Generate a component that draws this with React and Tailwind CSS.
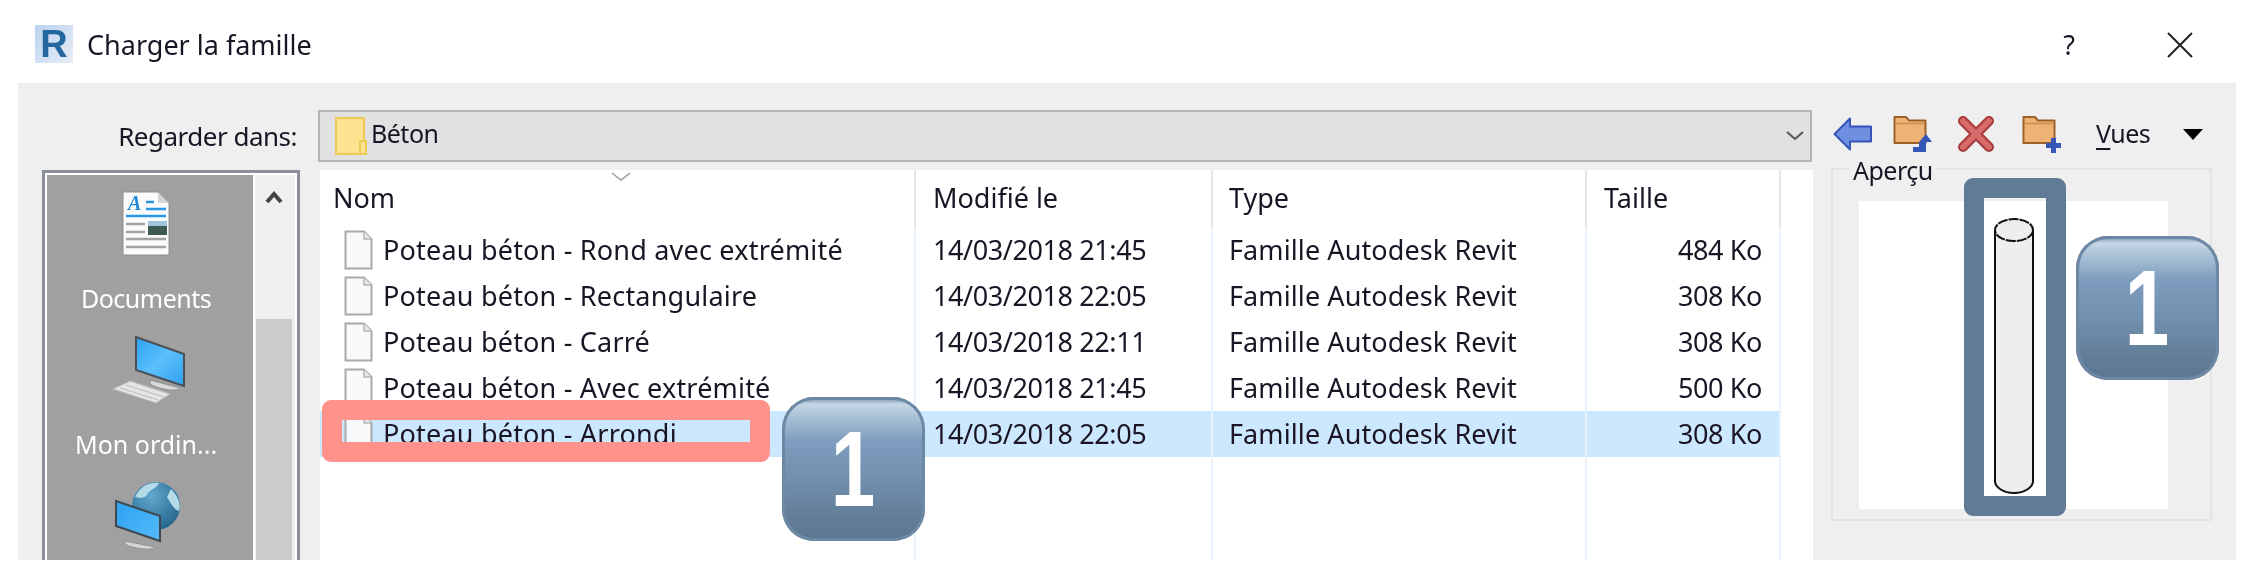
const rows = [
  ["Poteau béton - Rond avec extrémité", "14/03/2018 21:45", "484 Ko"],
  ["Poteau béton - Rectangulaire", "14/03/2018 22:05", "308 Ko"],
  ["Poteau béton - Carré", "14/03/2018 22:11", "308 Ko"],
  ["Poteau béton - Avec extrémité", "14/03/2018 21:45", "500 Ko"],
  ["Poteau béton - Arrondi", "14/03/2018 22:05", "308 Ko"],
];

function FileIcon() {
  return (
    <svg width="29" height="40" viewBox="0 0 29 40" className="shrink-0">
      <path d="M1.5 1.5H20L27.5 9V38.5H1.5Z" fill="#f8f9fa" stroke="#a9a9a9" strokeWidth="2" />
      <path d="M20 1.5V9H27.5" fill="#e8e8e8" stroke="#b5b5b5" strokeWidth="1.5" />
    </svg>
  );
}

function DocIcon() {
  return (
    <svg width="48" height="66" viewBox="0 0 48 66">
      <path d="M1 1H36L47 12V64H1Z" fill="#fbfbfb" stroke="#8e8e8e" />
      <path d="M36 1V12H47Z" fill="#d5d5d5" />
      <text x="6" y="19" fontSize="20" fontWeight="700" fontStyle="italic" fill="#1f88d8" fontFamily="Liberation Serif">A</text>
      <path d="M24 11H32M24 18H44M4 25H44" stroke="#2a97e6" strokeWidth="2.5" />
      <path d="M4 33H23M4 41H23M4 48H44M4 56H44" stroke="#a3a3a3" strokeWidth="2.5" />
      <rect x="26" y="30" width="19" height="14" fill="#3c5a50" />
      <rect x="26" y="30" width="19" height="5" fill="#9fc4dc" />
    </svg>
  );
}

function PcIcon() {
  return (
    <svg width="74" height="68" viewBox="0 0 74 68">
      <defs>
        <linearGradient id="scr" x1="0" y1="0" x2="1" y2="1">
          <stop offset="0" stopColor="#2ba2f2" />
          <stop offset="0.5" stopColor="#5cc0fb" />
          <stop offset="1" stopColor="#2f9ff0" />
        </linearGradient>
      </defs>
      <path d="M24 1L72 18V50L24 34Z" fill="url(#scr)" stroke="#4c5158" strokeWidth="2" />
      <path d="M38 44L68 52C66 56 48 54 38 48Z" fill="#d7dadc" stroke="#8f8f8f" />
      <path d="M1 53L18 45L58 58L44 67Z" fill="#e3e4e5" stroke="#b9b9b9" />
      <path d="M8 52L46 64M14 49L52 61" stroke="#bdbdbd" />
    </svg>
  );
}

function NetIcon() {
  return (
    <svg width="68" height="70" viewBox="0 0 68 70">
      <defs>
        <radialGradient id="glb" cx="0.4" cy="0.3" r="0.8">
          <stop offset="0" stopColor="#62a9cf" />
          <stop offset="1" stopColor="#1f5f86" />
        </radialGradient>
        <linearGradient id="scr2" x1="0" y1="0" x2="1" y2="1">
          <stop offset="0" stopColor="#2ba2f2" />
          <stop offset="1" stopColor="#55bbfa" />
        </linearGradient>
      </defs>
      <circle cx="41" cy="25" r="24" fill="url(#glb)" />
      <path d="M20 16C26 4 36 1 44 2C42 8 34 8 32 14C28 18 24 17 20 16ZM56 8C64 16 66 24 64 30C58 28 56 22 52 16Z" fill="#b5dbe8" />
      <path d="M1 20L45 35V60L1 45Z" fill="url(#scr2)" stroke="#3f4850" strokeWidth="2" />
      <path d="M10 60L40 66C38 70 18 68 10 63Z" fill="#d3d6d8" stroke="#8f8f8f" />
    </svg>
  );
}

function FolderBody() {
  return (
    <>
      <path d="M1.5 3H13L16 6.5H32.5V29H1.5Z" fill="#f0b274" stroke="#9c6128" strokeWidth="2" strokeLinejoin="round" />
      <path d="M2.5 9.5H31.5" stroke="#c98d4e" strokeWidth="1.5" />
    </>
  );
}

function Badge() {
  return (
    <div className="w-[143px] h-[144px] rounded-[32px] bg-[linear-gradient(180deg,#6f89a3_0%,#c6d7e6_5%,#a9c0d6_14%,#7f9ebf_30%,#7291b0_55%,#627c96_85%,#5b7690_100%)] shadow-[inset_0_0_0_3px_#6d88a4] flex items-center justify-center">
      <span className="scale-x-[0.74] font-['Liberation_Sans'] font-bold text-white text-[108px] leading-none">1</span>
    </div>
  );
}

export default function App() {
  return (
    <div className="relative w-[2244px] h-[570px] bg-white overflow-hidden font-['Noto_Sans',sans-serif] text-[#1b1424] text-[27px] [filter:blur(0.45px)]">
      {/* title bar */}
      <div className="h-[83px] flex items-start pt-[25px]">
        <div className="ml-[35px] w-[38px] h-[38px] bg-[linear-gradient(135deg,#bcd2ee,#e6eef8)] flex items-center justify-center">
          <span className="font-['Liberation_Sans'] font-bold text-[38px] leading-none text-[#24679f]">R</span>
        </div>
        <span className="ml-[14px] leading-[40px]">Charger la famille</span>
        <span className="ml-auto mr-[92px] leading-[40px]">?</span>
        <svg width="26" height="26" viewBox="0 0 26 26" className="mr-[51px] mt-[7px]">
          <path d="M1 1L25 25M25 1L1 25" stroke="#222" strokeWidth="2" />
        </svg>
      </div>

      {/* dialog body */}
      <div className="ml-[18px] w-[2218px] h-[477px] bg-[#efefef] flex flex-col">
        <div className="h-[87px] flex items-start pt-[27px] shrink-0">
          <div className="w-[279px] text-right leading-[52px] text-[26px] tracking-[-0.5px]">Regarder dans:</div>
          <div className="ml-[21px] w-[1494px] h-[52px] bg-[#e1e1e1] border-2 border-[#b4b4b4] flex items-center pl-[15px] pr-[5px]">
            <svg width="32" height="38" viewBox="0 0 32 38" className="shrink-0">
              <rect x="1" y="1" width="28" height="36" fill="#fde28f" stroke="#edc95a" strokeWidth="2" />
              <rect x="25" y="24" width="6" height="13" fill="#fde28f" stroke="#edc95a" strokeWidth="2" />
            </svg>
            <span className="ml-[4px] mb-[5px] text-[25px] tracking-[-0.5px]">Béton</span>
            <svg width="20" height="12" viewBox="0 0 20 12" className="ml-auto">
              <path d="M2 2L10 9L18 2" fill="none" stroke="#555" strokeWidth="2" />
            </svg>
          </div>

          <div className="ml-[21px] mt-[4px] h-[40px] flex items-center">
            <svg width="40" height="34" viewBox="0 0 40 34">
              <path d="M1.5 17L17 1.5V9.5H38V24.5H17V32.5Z" fill="#6f8fe0" stroke="#3553b8" strokeWidth="2" strokeLinejoin="round" />
            </svg>
            <svg width="40" height="40" viewBox="0 0 40 40" className="ml-[20px]">
              <FolderBody />
              <path d="M20 38V33H26V28L33 20L39 28H33V38Z" fill="#3558b8" />
            </svg>
            <svg width="36" height="36" viewBox="0 0 36 36" className="ml-[25px]">
              <path d="M5 5L31 31M31 5L5 31" stroke="#a83a3a" strokeWidth="10" strokeLinecap="round" />
              <path d="M5 5L31 31M31 5L5 31" stroke="#d76b6b" strokeWidth="6" strokeLinecap="round" />
            </svg>
            <svg width="40" height="40" viewBox="0 0 40 40" className="ml-[28px]">
              <FolderBody />
              <path d="M29 24V29H24V34H29V39H34V34H39V29H34V24Z" fill="#3558b8" />
            </svg>
            <span className="ml-[34px] text-[25px] tracking-[-0.5px]"><span className="underline underline-offset-[5px]">V</span>ues</span>
            <svg width="20" height="11" viewBox="0 0 20 11" className="ml-[33px]">
              <path d="M0 0H20L10 11Z" fill="#000" />
            </svg>
          </div>
        </div>

        <div className="flex items-start flex-1 min-h-0">
          {/* places sidebar */}
          <div className="ml-[24px] w-[258px] h-[390px] border-[3px] border-b-0 border-[#8b8f97] p-[2px] pb-0 bg-white flex shrink-0">
            <div className="w-[207px] pr-[8px] bg-[#a0a0a0] flex flex-col items-center text-white text-[25px] overflow-hidden">
              <div className="mt-[16px]"><DocIcon /></div>
              <div className="mt-[24px] leading-[34px] tracking-[-0.5px]">Documents</div>
              <div className="mt-[21px] ml-[6px]"><PcIcon /></div>
              <div className="mt-[23px] leading-[34px]">Mon ordin...</div>
              <div className="mt-[20px] ml-[6px]"><NetIcon /></div>
            </div>
            <div className="ml-[2px] w-[40px] bg-[#f0f0f0] flex flex-col items-center">
              <svg width="18" height="14" viewBox="0 0 18 14" className="mt-[15px] mr-[3px]">
                <path d="M2 12L9 4L16 12" fill="none" stroke="#444" strokeWidth="4" />
              </svg>
              <div className="mt-[115px] mr-[3px] w-[36px] flex-1 bg-[#cccccc]" />
            </div>
          </div>

          {/* file list */}
          <div className="ml-[20px] w-[1493px] h-[390px] bg-white shrink-0 relative">
            <svg width="20" height="10" viewBox="0 0 20 10" className="absolute left-[291px] top-[2px]">
              <path d="M1 1L10 8L19 1" fill="none" stroke="#9a9a9a" strokeWidth="1.5" />
            </svg>
            <div className="grid grid-cols-[596px_297px_374px_194px_32px] h-[57px]">
              <div className="border-r-2 border-[#e5e5e5] pl-[13px] leading-[56px]">Nom</div>
              <div className="border-r-2 border-[#e5e5e5] pl-[17px] leading-[56px]">Modifié le</div>
              <div className="border-r-2 border-[#e5e5e5] pl-[16px] leading-[56px]">Type</div>
              <div className="border-r-2 border-[#e5e5e5] pl-[17px] leading-[56px]">Taille</div>
              <div />
            </div>
            {rows.map((r, i) => (
              <div key={r[0]} className={(i === 4 ? "bg-[#cce8ff] " : "") + "grid grid-cols-[596px_297px_374px_194px] w-[1461px] h-[46px]"}>
                <div className="pl-[24px] flex items-center gap-[10px] border-r-2 border-[#eaf2fb] whitespace-nowrap tracking-[0.2px]">
                  <FileIcon />
                  <span>{r[0]}</span>
                </div>
                <div className="pl-[17px] flex items-center border-r-2 border-[#eaf2fb] tracking-[-0.4px]">{r[1]}</div>
                <div className="pl-[16px] flex items-center border-r-2 border-[#eaf2fb] tracking-[0.1px]">Famille Autodesk Revit</div>
                <div className="pr-[17px] flex items-center justify-end border-r-2 border-[#eaf2fb] tracking-[-0.4px]">{r[2]}</div>
              </div>
            ))}
            <div className="grid grid-cols-[596px_297px_374px_194px] w-[1461px] h-[103px]">
              <div className="border-r-2 border-[#eaf2fb]" />
              <div className="border-r-2 border-[#eaf2fb]" />
              <div className="border-r-2 border-[#eaf2fb]" />
              <div className="border-r-2 border-[#eaf2fb]" />
            </div>
          </div>

          {/* preview */}
          <div className="relative ml-[18px] -mt-[2px] w-[381px] h-[353px] border-2 border-[#e3e3e3] pt-[31px] pl-[26px] shrink-0">
            <span className="absolute -top-[16px] left-[16px] px-[4px] bg-[#efefef] leading-[32px] text-[25px] tracking-[-0.5px]">Aperçu</span>
            <div className="w-[309px] h-[308px] bg-white flex justify-center">
              <svg width="42" height="278" viewBox="0 0 42 278" className="mt-[16px]">
                <path d="M2 13V264C2 270 10 276 21 276C32 276 40 270 40 264V13" fill="#eeeeee" stroke="#111" strokeWidth="2" />
                <ellipse cx="21" cy="13" rx="19" ry="11" fill="#eeeeee" stroke="#111" strokeWidth="2" strokeDasharray="10 1" />
              </svg>
            </div>
          </div>
        </div>
      </div>

      {/* annotation overlays */}
      <div className="absolute left-[322px] top-[400px] w-[448px] h-[62px] rounded-[9px] border-x-[20px] border-y-[20px] border-[#ff928a]" />
      <div className="absolute left-[782px] top-[397px]"><Badge /></div>
      <div className="absolute left-[1964px] top-[178px] w-[102px] h-[338px] rounded-[9px] border-[20px] border-[#617a95]" />
      <div className="absolute left-[2076px] top-[236px]"><Badge /></div>
    </div>
  );
}
